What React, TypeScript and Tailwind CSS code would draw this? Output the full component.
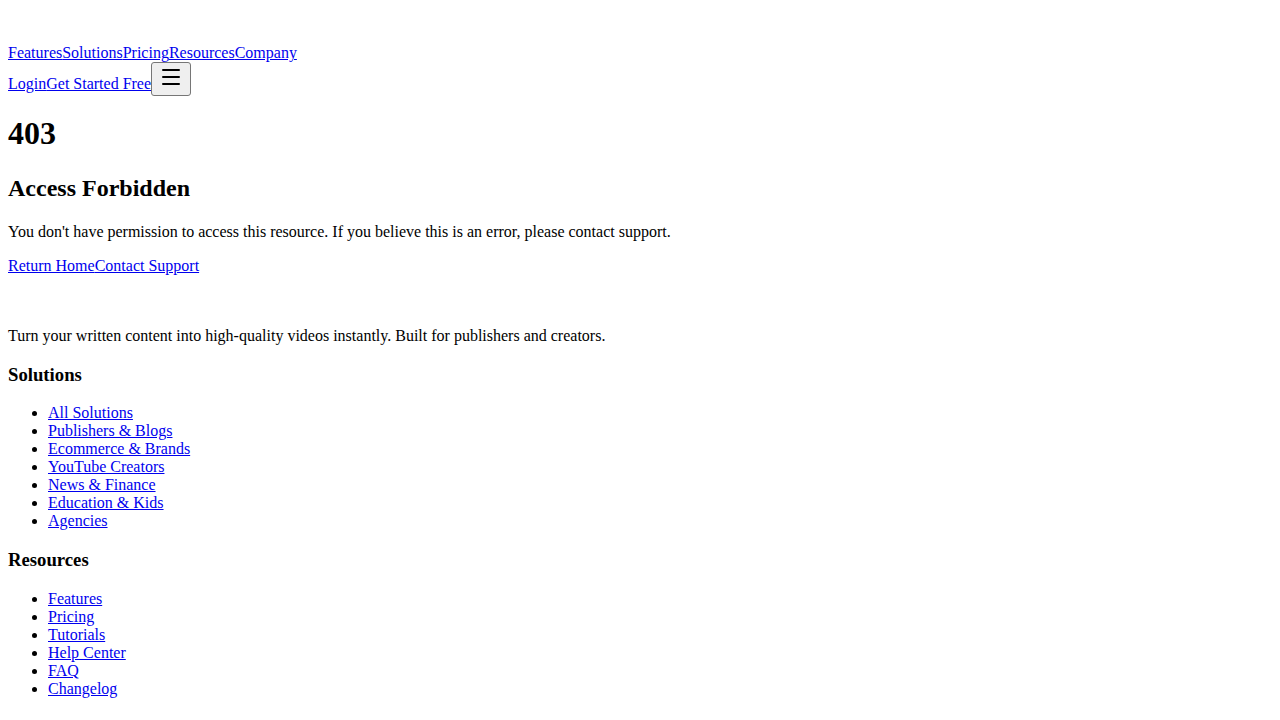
import { Menu } from 'lucide-react';

const navLinks = ['Features', 'Solutions', 'Pricing', 'Resources', 'Company'];

const solutions = [
  'All Solutions',
  'Publishers & Blogs',
  'Ecommerce & Brands',
  'YouTube Creators',
  'News & Finance',
  'Education & Kids',
  'Agencies',
];

const resources = ['Features', 'Pricing', 'Tutorials', 'Help Center', 'FAQ', 'Changelog'];

const linkCls = 'text-[#0000ee] underline';

function LinkList({ title, items }: { title: string; items: string[] }) {
  return (
    <div>
      <h3 className="text-[18.72px] font-bold my-[18.72px]">{title}</h3>
      <ul className="list-disc pl-10">
        {items.map((item) => (
          <li key={item}>
            <a href="#" className={linkCls}>
              {item}
            </a>
          </li>
        ))}
      </ul>
    </div>
  );
}

export default function App() {
  return (
    <div className="min-h-screen bg-white text-black p-2 text-[16px] leading-[normal] font-['Liberation_Serif','Times_New_Roman',serif]">
      <header>
        {/* logo slot, empty in this render */}
        <a href="#" className="block h-9" aria-label="Home" />
        <nav>
          {navLinks.map((l) => (
            <a key={l} href="#" className={linkCls}>
              {l}
            </a>
          ))}
        </nav>
        <div>
          <a href="#" className={linkCls}>
            Login
          </a>
          <a href="#" className={linkCls}>
            Get Started Free
          </a>
          <button className="inline-block align-baseline bg-[#efefef] border border-[#767676] rounded-[3px] px-[7px] pt-[2px] pb-[2px] leading-[normal]">
            <Menu className="inline align-baseline w-6 h-6 text-black" strokeWidth={2} />
          </button>
        </div>
      </header>

      <main>
        <h1 className="text-[32px] font-bold mt-[19.44px] mb-[22.44px]">403</h1>
        <h2 className="text-[24px] font-bold mt-[19.92px] mb-[20.92px]">Access Forbidden</h2>
        <p className="my-4">
          You don't have permission to access this resource. If you believe this is an error, please contact support.
        </p>
        <div>
          <a href="#" className={linkCls}>
            Return Home
          </a>
          <a href="#" className={linkCls}>
            Contact Support
          </a>
        </div>
      </main>

      <footer>
        <a href="#" className="block h-9" aria-label="Home" />
        <p className="my-4">Turn your written content into high-quality videos instantly. Built for publishers and creators.</p>
        <LinkList title="Solutions" items={solutions} />
        <LinkList title="Resources" items={resources} />
      </footer>
    </div>
  );
}
